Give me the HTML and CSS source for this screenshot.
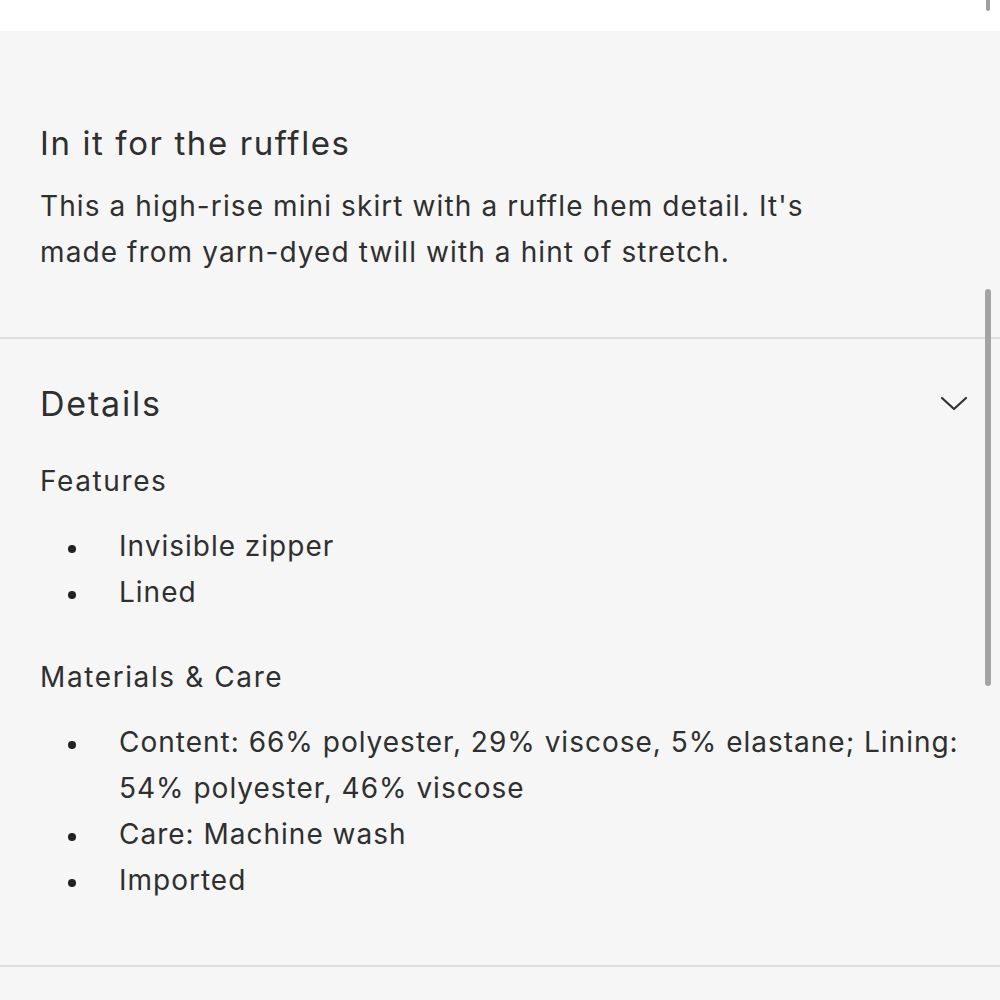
FILE: index.html
```html
<!DOCTYPE html>
<html>
<head>
<meta charset="utf-8">
<link rel="stylesheet" href="styles.css">
</head>
<body>
<div class="topbar"><span class="top-thumb"></span></div>
<main class="panel">
  <section class="intro">
    <h2 class="intro-title">In it for the ruffles</h2>
    <p class="intro-text">This a high-rise mini skirt with a ruffle hem detail. It's<br>made from yarn-dyed twill with a hint of stretch.</p>
  </section>
  <section class="details">
    <div class="details-head">
      <h3 class="details-title">Details</h3>
      <svg class="chevron" width="28" height="16" viewBox="0 0 28 16"><path d="M2 2 L14 13 L26 2" fill="none" stroke="#333" stroke-width="2.2" stroke-linecap="round" stroke-linejoin="round"/></svg>
    </div>
    <h4 class="sub">Features</h4>
    <ul class="list">
      <li>Invisible zipper</li>
      <li>Lined</li>
    </ul>
    <h4 class="sub sub-2">Materials &amp; Care</h4>
    <ul class="list">
      <li>Content: 66% polyester, 29% viscose, 5% elastane; Lining: 54% polyester, 46% viscose</li>
      <li>Care: Machine wash</li>
      <li>Imported</li>
    </ul>
  </section>
  <span class="scroll-thumb"></span>
</main>
</body>
</html>
```
FILE: styles.css
```css
html, body { margin: 0; padding: 0; }
body {
  background: #f6f6f6;
  font-family: Inter, "Liberation Sans", sans-serif;
  color: #2f2f2f;
  width: 1000px;
  height: 1000px;
  overflow: hidden;
}
.topbar {
  height: 31px;
  background: #fff;
  position: relative;
}
.top-thumb {
  position: absolute;
  left: 986px;
  top: 0;
  width: 4px;
  height: 11px;
  background: #9e9e9e;
  border-radius: 0 0 2px 2px;
}
.panel {
  position: relative;
  background: #f6f6f6;
}
.intro {
  padding: 92px 40px 62px 40px;
  border-bottom: 2px solid #dedede;
}
.intro-title {
  margin: 0;
  font-size: 33px;
  line-height: 40px;
  font-weight: 400;
  letter-spacing: 1.6px;
}
.intro-text {
  margin: 20px 0 0 0;
  font-size: 28px;
  line-height: 46px;
  letter-spacing: 1.1px;
}
.details {
  padding: 42px 32px 62px 40px;
  border-bottom: 2px solid #dedede;
}
.details-head {
  display: flex;
  align-items: center;
  justify-content: space-between;
}
.details-title {
  margin: 0;
  font-size: 34px;
  line-height: 46px;
  font-weight: 400;
  letter-spacing: 1.8px;
}
.chevron { display: block; }
.sub {
  margin: 31px 0 0 0;
  font-size: 28px;
  line-height: 46px;
  font-weight: 400;
  letter-spacing: 1.6px;
}
.sub-2 { margin-top: 39px; }
.list {
  list-style: none;
  margin: 19px 0 0 0;
  padding: 0;
  font-size: 28px;
  line-height: 46px;
  letter-spacing: 1px;
}
.list li {
  display: grid;
  grid-template-columns: 79px 1fr;
}
.list li::before {
  content: "";
  width: 8px;
  height: 8px;
  border-radius: 50%;
  background: #222;
  margin: 22px 0 0 28px;
}
.scroll-thumb {
  position: absolute;
  left: 985px;
  top: 258px;
  width: 6px;
  height: 397px;
  background: #a4a4a4;
  border-radius: 3px;
}
```
